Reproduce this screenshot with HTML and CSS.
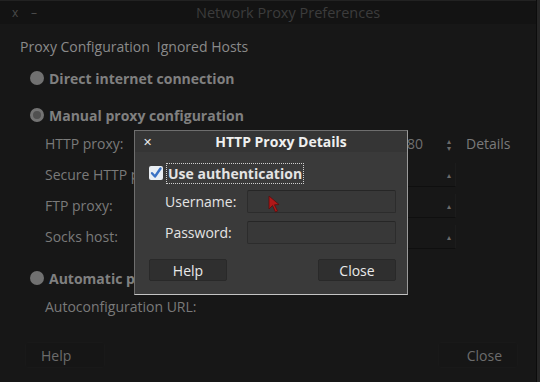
FILE: index.html
```html
<!DOCTYPE html>
<html lang="en">
<head>
    <meta charset="UTF-8">
    <title>Network Proxy Preferences</title>
    <link rel="stylesheet" href="styles.css">
</head>
<body>
    <div class="window">
        <div class="titlebar">
            <span class="tb-btn">x</span>
            <span class="tb-btn tb-min">–</span>
            <span class="tb-title">Network Proxy Preferences</span>
        </div>

        <div class="tabs">
            <span>Proxy Configuration</span>
            <span>Ignored Hosts</span>
        </div>

        <div class="option"><span class="radio"></span>Direct internet connection</div>
        <div class="option manual"><span class="radio checked"></span>Manual proxy configuration</div>

        <div class="proxy-rows">
            <div class="proxy-row">
                <span class="label">HTTP proxy:</span>
                <span class="port first">80<span class="spin">▴<br>▾</span></span>
                <span class="details">Details</span>
            </div>
            <div class="proxy-row">
                <span class="label">Secure HTTP proxy:</span>
                <span class="port"><span class="spin">▴</span></span>
            </div>
            <div class="proxy-row">
                <span class="label">FTP proxy:</span>
                <span class="port"><span class="spin">▴</span></span>
            </div>
            <div class="proxy-row">
                <span class="label">Socks host:</span>
                <span class="port"><span class="spin">▴</span></span>
            </div>
        </div>

        <div class="option auto"><span class="radio"></span>Automatic proxy configuration</div>
        <div class="url-row">Autoconfiguration URL:</div>

        <div class="actions">
            <button class="win-btn">Help</button>
            <button class="win-btn">Close</button>
        </div>
    </div>

    <!-- dialog sits on top of the preferences window -->
    <div class="dialog">
        <div class="dlg-title">
            <span class="dlg-x">✕</span>
            <span class="dlg-name">HTTP Proxy Details</span>
        </div>
        <div class="dlg-body">
            <label class="check-row">
                <span class="checkbox">
                    <svg width="14" height="14" viewBox="0 0 14 14"><path d="M3 7.2 L6 10.5 L11.5 2.5" fill="none" stroke="#3a72c4" stroke-width="2.4" stroke-linecap="round" stroke-linejoin="round"/></svg>
                </span>
                <span class="focus">Use authentication</span>
            </label>
            <div class="field">
                <span class="field-label">Username:</span>
                <span class="entry"></span>
            </div>
            <div class="field">
                <span class="field-label">Password:</span>
                <span class="entry"></span>
            </div>
            <div class="dlg-actions">
                <button class="dlg-btn">Help</button>
                <button class="dlg-btn">Close</button>
            </div>
        </div>
        <svg class="cursor" width="12" height="18" viewBox="0 0 12 18"><path d="M1 1 L1 14 L4.5 10.5 L7.5 17 L9.5 16 L6.5 9.8 L11 9.5 Z" fill="#b01818" stroke="#5a0c0c" stroke-width="0.8"/></svg>
    </div>
</body>
</html>
```

FILE: styles.css
```css
body {
    margin: 0;
    width: 540px;
    height: 382px;
    overflow: hidden;
    background-color: #262626;
    font-family: "Open Sans", "DejaVu Sans", sans-serif;
    font-size: 14px;
    color: #7c7c7c;
    position: relative;
}

.window {
    width: 536px;
    height: 382px;
    background-color: #171717;
    border-right: 1px solid #0c0c0c;
    display: flex;
    flex-direction: column;
}

.titlebar {
    height: 24px;
    display: flex;
    align-items: center;
    background-color: #131313;
    border-top: 1px solid #222;
    box-sizing: border-box;
    color: #3e3e3e;
}

.tb-btn {
    margin-left: 12px;
    width: 10px;
    font-size: 12px;
    color: #4a4a4a;
}

.tb-min {
    margin-left: 9px;
}

.tb-title {
    margin-left: 155px;
    font-size: 14.5px;
    color: #3c3c3c;
}

.tabs {
    height: 24px;
    margin-top: 10px;
    padding-left: 20px;
    display: flex;
    align-items: center;
    gap: 7px;
    color: #8a8a8a;
}

.option {
    height: 24px;
    margin-top: 8px;
    padding-left: 30px;
    display: flex;
    align-items: center;
    gap: 5px;
    font-weight: bold;
    color: #808080;
}

.option.manual {
    margin-top: 13px;
}

.option.auto {
    margin-top: 14px;
}

.radio {
    width: 14px;
    height: 14px;
    border-radius: 50%;
    background-color: #717171;
    box-sizing: border-box;
}

.radio.checked {
    border: 3px solid #737373;
    background-color: #505050;
}

.proxy-rows {
    display: flex;
    flex-direction: column;
    margin-top: 1px;
}

.proxy-row {
    height: 31px;
    display: flex;
    align-items: center;
    padding-left: 45px;
}

.label {
    width: 362px;
    color: #7a7a7a;
}

.port {
    width: 44px;
    height: 23px;
    display: flex;
    align-items: center;
    justify-content: space-between;
    padding-right: 4px;
    border-bottom: 1px solid #0f0f0f;
    border-right: 1px solid #1c1c1c;
    color: #6f6f6f;
}

.port.first {
    border: none;
}

.spin {
    margin-left: auto;
    font-size: 8px;
    line-height: 7px;
    color: #6a6a6a;
}

.details {
    margin-left: 11px;
    color: #7a7a7a;
}

.url-row {
    height: 24px;
    margin-top: 4px;
    padding-left: 45px;
    display: flex;
    align-items: center;
    color: #7a7a7a;
}

.actions {
    margin-top: 24px;
    padding: 0 18px 0 25px;
    display: flex;
    justify-content: space-between;
}

.win-btn {
    width: 80px;
    height: 26px;
    background-color: #161616;
    border: 1px solid #191919;
    border-radius: 3px;
    font-family: inherit;
    font-size: 14px;
    color: #6c6c6c;
    text-align: left;
    padding-left: 15px;
}

.win-btn:last-child {
    text-align: right;
    padding-right: 15px;
}

/* dialog */
.dialog {
    position: absolute;
    left: 134px;
    top: 130px;
    width: 274px;
    height: 165px;
    box-sizing: border-box;
    background-color: #3a3a3a;
    border: 1px solid #6e6e6e;
    border-bottom-color: #c4c4c4;
    border-right-color: #9a9a9a;
    color: #e4e4e4;
}

.dlg-title {
    height: 21px;
    display: flex;
    align-items: center;
    background-color: #353535;
    position: relative;
}

.dlg-x {
    margin-left: 8px;
    font-size: 11px;
    font-weight: bold;
    color: #e8e8e8;
}

.dlg-name {
    position: absolute;
    left: 20px;
    right: 0;
    text-align: center;
    font-weight: bold;
    color: #efefef;
}

.dlg-body {
    display: flex;
    flex-direction: column;
    padding: 10px 11px 0 14px;
}

.check-row {
    display: flex;
    align-items: center;
    gap: 4px;
    height: 22px;
}

.checkbox {
    width: 14px;
    height: 14px;
    border-radius: 2px;
    background-color: #e9eef3;
    display: flex;
    align-items: center;
    justify-content: center;
}

.focus {
    font-weight: bold;
    outline: 1px dotted #cfcfcf;
    padding: 0 1px;
}

.field {
    display: flex;
    align-items: center;
    height: 23px;
    margin-top: 6px;
    padding-left: 16px;
}

.field + .field {
    margin-top: 8px;
}

.field-label {
    width: 82px;
}

.entry {
    width: 150px;
    height: 23px;
    box-sizing: border-box;
    background-color: #383838;
    border: 1px solid #2c2c2c;
    border-top-color: #262626;
    border-radius: 2px;
}

.dlg-actions {
    display: flex;
    justify-content: space-between;
    margin-top: 15px;
}

.dlg-btn {
    width: 78px;
    height: 22px;
    background-color: #2f2f2f;
    border: 1px solid #292929;
    border-radius: 2px;
    font-family: inherit;
    font-size: 14px;
    color: #eaeaea;
}

.cursor {
    position: absolute;
    left: 133px;
    top: 64px;
}
```
